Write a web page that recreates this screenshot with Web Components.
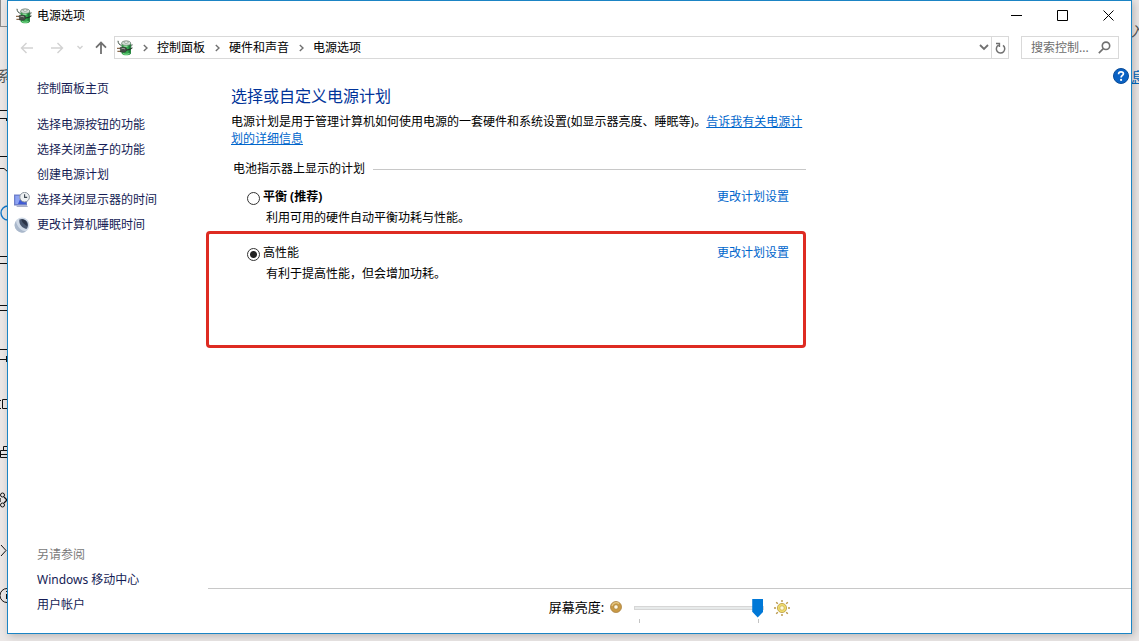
<!DOCTYPE html>
<html lang="zh-CN">
<head>
<meta charset="utf-8">
<title>电源选项</title>
<style>
  html, body {
    margin: 0;
    height: 100%;
  }

  body {
    font: 12px/18px "Noto Sans", "Noto Sans CJK SC", sans-serif;
    color: #000000;
  }
</style>
</head>
<body>
<desktop-area>
  <power-window>
    <title-bar slot="title">电源选项</title-bar>
    <address-bar slot="address"></address-bar>
    <side-nav slot="side"></side-nav>
    <plan-list>
      <power-plan recommended>
        平衡 (推荐)
        <span slot="description">利用可用的硬件自动平衡功耗与性能。</span>
      </power-plan>
      <power-plan checked highlighted>
        高性能
        <span slot="description">有利于提高性能，但会增加功耗。</span>
      </power-plan>
    </plan-list>
    <brightness-bar slot="footer"></brightness-bar>
  </power-window>
</desktop-area>

<script>
class DesktopArea extends HTMLElement {
  constructor () {
    super()
    this.shadow = this.attachShadow({ mode: 'open' })
  }

  connectedCallback () {
    this.shadow.innerHTML =
      /* html */`
      <style>
        :host {
          display: flex;
          position: relative;
          box-sizing: border-box;
          min-height: 100%;
          padding: 0 7px 7px;
          overflow: hidden;
          background: #ebe7e6;
        }

        ::slotted(*) {
          flex: 1;
          position: relative;
        }

        /* the settings page that peeks out behind the window */
        svg, .peek {
          position: absolute;
        }

        svg {
          left: 0;
          top: 0;
        }

        .peek {
          font-size: 14px;
          line-height: 20px;
          color: #555555;
        }

        .left {
          left: -3px;
          top: 66px;
        }

        .right {
          left: calc(100% - 8px);
          top: 21px;
        }

        .link {
          left: calc(100% - 8px);
          top: 67px;
          color: #0067c0;
          text-decoration: underline;
        }
      </style>

      <svg width="14" height="641" fill="none" stroke="#111111" aria-hidden="true">
        <path d="M0 26.5H8M.5 0V26" stroke="#8c8c8c"/>
        <path d="M0 110.5H8M0 118.5H8M6.5 119V121M0 156.5H8M0 168.5H4L8 172M0 256.5H8M0 263.5H8M0 305.5H8M0 310.5H8M0 349.5H8M0 359.5H8M6.5 356V362"/>
        <circle cx="8" cy="213" r="7" stroke="#1478c8" stroke-width="1.4"/>
        <path d="M0 400.5H1M0 408.5H1M8 399.5H2.5V408.5H8"/>
        <path d="M8 446.5H3.5V450.5M8 450.5H.5V457.5H8M0 454.5H8"/>
        <circle cx="2.5" cy="495" r="2"/>
        <circle cx="2.5" cy="505" r="2"/>
        <path d="M4 497L7 500L4 503M0 498V502" stroke-width="1.3"/>
        <path d="M1 545L6 550.5L1 556"/>
        <circle cx="7" cy="595.5" r="7"/>
        <path d="M6.5 594V599M6.5 591V592"/>
      </svg>
      <span class="peek left">系</span>
      <span class="peek right">入</span>
      <span class="peek link">息</span>
      <slot></slot>
      `
    this.style.height = '100%'
  }
}

class PowerWindow extends HTMLElement {
  constructor () {
    super()
    this.shadow = this.attachShadow({ mode: 'open' })
  }

  connectedCallback () {
    this.shadow.innerHTML =
      /* html */`
      <style>
        :host {
          display: flex;
          flex-direction: column;
          box-sizing: border-box;
          border: 1px solid #1b84c4;
          background: #ffffff;
          box-shadow: 2px 2px 8px rgba(0, 0, 0, 0.22);
        }

        .body {
          flex: 1;
          display: flex;
        }

        ::slotted(side-nav) {
          flex: 0 0 200px;
        }

        .main {
          flex: 1;
          min-width: 0;
          display: flex;
          flex-direction: column;
        }

        .content {
          flex: 1;
          display: flex;
          justify-content: space-between;
          align-items: flex-start;
        }

        .help {
          display: flex;
          margin: 9px 2px 0 0;
          padding: 0;
          border: none;
          border-radius: 50%;
          background: none;
        }
      </style>

      <slot name="title"></slot>
      <slot name="address"></slot>
      <div class="body">
        <slot name="side"></slot>
        <div class="main">
          <div class="content">
            <slot></slot>
            <button class="help" aria-label="帮助">
              <svg width="16" height="16" viewBox="0 0 16 16" fill="none">
                <circle cx="8" cy="8" r="7.5" fill="#0a62c4" stroke="#0b4c98"/>
                <path d="M5.6 6.2C5.6 4.6 6.6 3.8 8 3.8C9.5 3.8 10.4 4.7 10.4 5.8C10.4 7.4 8.1 7.5 8.1 9.5" stroke="#ffffff" stroke-width="1.7"/>
                <circle cx="8.1" cy="11.9" r="1.1" fill="#ffffff"/>
              </svg>
            </button>
          </div>
          <slot name="footer"></slot>
        </div>
      </div>
      `
  }
}

// green battery with a plug in front of it
class PowerIcon extends HTMLElement {
  constructor () {
    super()
    this.shadow = this.attachShadow({ mode: 'open' })
  }

  connectedCallback () {
    this.shadow.innerHTML =
      /* html */`
      <style>
        :host {
          display: flex;
          flex: none;
        }
      </style>

      <svg width="16" height="16" viewBox="0 0 16 16" fill="none" aria-hidden="true">
        <path d="M4.6 3.2V13.4C6.2 16 12.2 16 13.8 13.4V3.2Z" fill="#35a94f"/>
        <path d="M11.6 4V14.9C12.8 14.6 13.8 14 13.8 13.3V3.6Z" fill="#1d7a37"/>
        <path d="M6 12.8C7.5 14.2 10.5 14.2 12.6 12.8V13.8C11 15.2 7.5 15.2 6 13.8Z" fill="#7ed68c"/>
        <ellipse cx="9.2" cy="3.2" rx="4.5" ry="2.2" fill="#d3dfd6" stroke="#5c7062" stroke-width=".7"/>
        <ellipse cx="9.2" cy="2.2" rx="2" ry="1.1" fill="#f4f8f4" stroke="#6d7c70" stroke-width=".6"/>
        <path d="M6.6 6.2H10.5" stroke="#a5e8ae" stroke-width="1.2"/>
        <path d="M1 .8C1.2 3.6 2.4 4.8 4.6 5.4M13.6 6C14.8 6.2 15.4 5.2 14.9 4.2" stroke="#3b4d42"/>
        <path d="M0 8.4H3.6M.4 11.4H4" stroke="#8a6b4e" stroke-width="1.3"/>
        <path d="M3.2 7.4L6.2 7C8.8 7.2 10 8.6 9.8 10C9.4 11.8 7.8 12.4 6.2 12.3L3.6 12.1Z" fill="#454d47" stroke="#202a22" stroke-width=".5"/>
        <path d="M4.6 8.7C6 8.2 7.4 8.4 8 9.2" stroke="#b0b6b0"/>
        <path d="M9.8 9.8C11.6 10.2 13.6 9.4 15.4 7.6" stroke="#22352a" stroke-width="1.1"/>
      </svg>
      `
  }
}

class TitleBar extends HTMLElement {
  constructor () {
    super()
    this.shadow = this.attachShadow({ mode: 'open' })
  }

  connectedCallback () {
    this.shadow.innerHTML =
      /* html */`
      <style>
        :host {
          display: flex;
          align-items: center;
          height: 30px;
          padding-left: 8px;
        }

        .title {
          flex: 1;
          padding-left: 5px;
        }

        button {
          display: grid;
          place-items: center;
          align-self: flex-start;
          width: 46px;
          height: 28px;
          padding: 0;
          border: none;
          background: none;
        }

        button:hover {
          background: #e5e5e5;
        }
      </style>

      <power-icon></power-icon>
      <span class="title"><slot></slot></span>
      <button aria-label="最小化"><svg width="11" height="11" stroke="#000000"><path d="M0 5.5H11"/></svg></button>
      <button aria-label="最大化"><svg width="11" height="11" stroke="#000000" fill="none"><path d="M.5 .5H10.5V10.5H.5Z"/></svg></button>
      <button aria-label="关闭"><svg width="11" height="11" stroke="#000000"><path d="M.5 .5L10.5 10.5M10.5 .5L.5 10.5"/></svg></button>
      `
  }
}

class AddressBar extends HTMLElement {
  constructor () {
    super()
    this.shadow = this.attachShadow({ mode: 'open' })

    this.crumbs = ['控制面板', '硬件和声音', '电源选项']
  }

  connectedCallback () {
    this.shadow.innerHTML =
      /* html */`
      <style>
        :host {
          display: flex;
          padding: 5px 12px 0 4px;
        }

        button {
          display: grid;
          place-items: center;
          padding: 0;
          border: none;
          background: none;
        }

        svg {
          fill: none;
          stroke: #707070;
          stroke-width: 1.4;
        }

        .back, .forward {
          width: 30px;
        }

        .recent {
          width: 16px;
        }

        .up {
          width: 26px;
        }

        :disabled svg {
          stroke: #d2d2d2;
        }

        .path, .search {
          display: flex;
          align-items: center;
          box-sizing: border-box;
          height: 23px;
          border: 1px solid #d9d9d9;
        }

        .path {
          flex: 1;
          padding-left: 2px;
        }

        nav {
          flex: 1;
          display: flex;
          align-items: center;
        }

        nav a {
          color: #000000;
          text-decoration: none;
        }

        .chevron {
          width: 24px;
        }

        .drop {
          width: 15px;
          height: 21px;
        }

        .refresh {
          width: 17px;
          height: 21px;
          border-left: 1px solid #d9d9d9;
        }

        .search {
          width: 98px;
          margin-left: 12px;
          padding: 0 7px 0 9px;
        }

        input {
          flex: 1;
          min-width: 0;
          padding: 0;
          border: none;
          outline: none;
          background: none;
          font: inherit;
        }

        input::placeholder {
          color: #6d6d6d;
        }
      </style>

      <button class="back" aria-label="后退" disabled><svg width="14" height="12"><path d="M13 6H1.5M6.5 1L1.5 6L6.5 11"/></svg></button>
      <button class="forward" aria-label="前进" disabled><svg width="14" height="12"><path d="M1 6H12.5M7.5 1L12.5 6L7.5 11"/></svg></button>
      <button class="recent" aria-label="最近浏览的位置" disabled><svg width="6" height="5"><path d="M.5 1L3 3.5L5.5 1"/></svg></button>
      <button class="up" aria-label="上移"><svg width="12" height="13" style="stroke-width: 1.8"><path d="M6 13V1.8M1 6.6L6 1.6L11 6.6"/></svg></button>
      <div class="path">
        <power-icon></power-icon>
        <nav aria-label="路径"></nav>
        <button class="drop" aria-label="以前的位置"><svg width="10" height="7" style="stroke-width: 1.8"><path d="M1 1L5 5L9 1"/></svg></button>
        <button class="refresh" aria-label="刷新"><svg width="11" height="12" style="stroke-width: 1.5"><path d="M8 3.4A4.2 4.2 0 1 1 3.4 3.2M1 1.4H4.4V5"/></svg></button>
      </div>
      <div class="search">
        <input type="text" placeholder="搜索控制..." aria-label="搜索控制面板">
        <svg width="13" height="13" style="stroke-width: 1.6" aria-hidden="true"><circle cx="8" cy="4.8" r="3.7"/><path d="M5.3 7.6L.8 12.1"/></svg>
      </div>
      `

    const nav = this.shadow.querySelector('nav')

    this.crumbs.forEach(crumb => {
      const chevron = document.createElement('button')
      chevron.classList.add('chevron')
      chevron.setAttribute('aria-label', '展开')
      chevron.innerHTML = '<svg width="5" height="8"><path d="M.8 1L4 4L.8 7"/></svg>'
      nav.appendChild(chevron)

      const link = document.createElement('a')
      link.href = '#'
      link.textContent = crumb
      nav.appendChild(link)
    })
  }
}

class SideNav extends HTMLElement {
  constructor () {
    super()
    this.shadow = this.attachShadow({ mode: 'open' })
  }

  connectedCallback () {
    this.shadow.innerHTML =
      /* html */`
      <style>
        :host {
          display: flex;
          flex-direction: column;
          justify-content: space-between;
          box-sizing: border-box;
          padding: 17px 0 16px 6px;
          line-height: 25px;
        }

        ul {
          margin: 0;
          padding: 0;
          list-style: none;
        }

        li {
          display: grid;
          grid-template-columns: 16px 1fr;
          column-gap: 7px;
          align-items: center;
        }

        .home {
          margin-bottom: 11px;
        }

        a, .heading {
          grid-column: 2;
          justify-self: start;
        }

        a {
          color: #151c55;
          text-decoration: none;
        }

        a:hover {
          text-decoration: underline;
        }

        .heading {
          color: #7a7a7a;
        }
      </style>

      <ul>
        <li class="home"><a href="#">控制面板主页</a></li>
        <li><a href="#">选择电源按钮的功能</a></li>
        <li><a href="#">选择关闭盖子的功能</a></li>
        <li><a href="#">创建电源计划</a></li>
        <li>
          <svg width="16" height="16" viewBox="0 0 16 16" aria-hidden="true">
            <path d="M0 2.5H13V13.5H0Z" fill="#6f7fc6"/>
            <path d="M1.2 3.8H12V12H1.2Z" fill="#3f5ad6"/>
            <path d="M1.2 3.8H7.5L4 12H1.2Z" fill="#8ea3f2"/>
            <path d="M2 13.5H13L14 15H3Z" fill="#a9afc8"/>
            <circle cx="10.6" cy="5.2" r="4.8" fill="#edf0f2" stroke="#8d969e"/>
            <path d="M10.6 2.2V5.4H13.2" fill="none" stroke="#3a4650" stroke-width="1.1"/>
          </svg>
          <a href="#">选择关闭显示器的时间</a>
        </li>
        <li>
          <svg width="16" height="16" viewBox="0 0 16 16" aria-hidden="true">
            <circle cx="8" cy="8" r="7.5" fill="#cfd9e6"/>
            <path d="M2 4A7.4 7.4 0 0 0 12 14.4C7 14 3 10 2 4Z" fill="#aab8cb"/>
            <path d="M5.4 2.6C9 .8 14 3.4 14 8C14 9.8 13.4 11.2 12.4 12C8.4 11.4 4.6 7.4 5.4 2.6Z" fill="#4a5870"/>
            <path d="M7.4 2.6C11 2 13.6 5 13.2 9C11.6 8.6 8 6 7.4 2.6Z" fill="#2b3447"/>
          </svg>
          <a href="#">更改计算机睡眠时间</a>
        </li>
      </ul>
      <ul>
        <li><span class="heading">另请参阅</span></li>
        <li><a href="#">Windows 移动中心</a></li>
        <li><a href="#">用户帐户</a></li>
      </ul>
      `
  }
}

class PlanList extends HTMLElement {
  constructor () {
    super()
    this.shadow = this.attachShadow({ mode: 'open' })
  }

  connectedCallback () {
    this.shadow.innerHTML =
      /* html */`
      <style>
        :host {
          display: block;
          flex: 0 1 575px;
          padding: 25px 0 0 23px;
        }

        h1 {
          margin: 0;
          font-size: 16px;
          line-height: 24px;
          font-weight: normal;
          color: #003399;
        }

        p {
          margin: 5px 0 13px;
          line-height: 17px;
        }

        p a {
          color: #0066cc;
        }

        h2 {
          display: flex;
          align-items: center;
          gap: 8px;
          margin: 0 0 10px;
          padding-left: 2px;
          font-size: 12px;
          font-weight: normal;
        }

        h2::after {
          content: "";
          flex: 1;
          border-top: 1px solid #c8c8c8;
        }
      </style>

      <h1>选择或自定义电源计划</h1>
      <p>电源计划是用于管理计算机如何使用电源的一套硬件和系统设置(如显示器亮度、睡眠等)。<a href="#">告诉我有关电源计划的详细信息</a></p>
      <h2>电池指示器上显示的计划</h2>
      <slot></slot>
      `

    // radios in separate shadow roots do not group by name
    this.addEventListener('plan-selected', event => {
      this.querySelectorAll('power-plan').forEach(plan => {
        plan.radio.checked = plan === event.target
      })
    })
  }
}

class PowerPlan extends HTMLElement {
  constructor () {
    super()
    this.shadow = this.attachShadow({ mode: 'open' })
  }

  connectedCallback () {
    this.shadow.innerHTML =
      /* html */`
      <style>
        :host {
          display: grid;
          grid-template-columns: 1fr auto;
          row-gap: 3px;
          padding: 0 17px 4px 16px;
        }

        :host([highlighted]) {
          margin-left: -25px;
          padding: 10px 14px 62px 38px;
          border: 3px solid #de2b22;
          border-radius: 4px;
        }

        :host([recommended]) label {
          font-weight: bold;
        }

        .choice {
          display: flex;
          align-items: center;
          gap: 3px;
        }

        input {
          appearance: none;
          box-sizing: border-box;
          width: 13px;
          height: 13px;
          margin: 2px 0 0;
          border: 1px solid #333333;
          border-radius: 50%;
          background: #ffffff;
        }

        input:checked {
          background: radial-gradient(circle, #222222 3px, #ffffff 4px);
        }

        a {
          color: #0066cc;
          text-decoration: none;
        }

        .description {
          grid-column: 1 / -1;
          padding-left: 19px;
        }
      </style>

      <div class="choice">
        <input type="radio" id="plan">
        <label for="plan"><slot></slot></label>
      </div>
      <a href="#">更改计划设置</a>
      <div class="description"><slot name="description"></slot></div>
      `

    this.radio = this.shadow.querySelector('input')
    this.radio.checked = this.hasAttribute('checked')
    this.radio.addEventListener('change', () => {
      this.dispatchEvent(new CustomEvent('plan-selected', { bubbles: true }))
    })
  }
}

class BrightnessBar extends HTMLElement {
  constructor () {
    super()
    this.shadow = this.attachShadow({ mode: 'open' })
  }

  connectedCallback () {
    this.shadow.innerHTML =
      /* html */`
      <style>
        :host {
          display: flex;
          justify-content: center;
          align-items: flex-start;
          padding: 9px 0 10px;
          border-top: 1px solid #c8c8c8;
        }

        label {
          font-size: 13px;
        }

        svg {
          flex: none;
        }

        .dim {
          margin: 3px 12px 0 6px;
        }

        .bright {
          margin: 2px 0 0 10px;
        }

        .slider {
          width: 130px;
        }

        input {
          appearance: none;
          display: block;
          width: 100%;
          height: 19px;
          margin: 0;
          background: none;
        }

        input::-webkit-slider-runnable-track {
          height: 4px;
          box-sizing: border-box;
          border: 1px solid #d6d6d6;
          background: #e7eaea;
        }

        input::-webkit-slider-thumb {
          appearance: none;
          width: 11px;
          height: 19px;
          margin-top: -8px;
          background: #0078d7;
          clip-path: polygon(0 0, 100% 0, 100% 70%, 50% 100%, 0 70%);
        }

        .ticks {
          height: 4px;
          margin: 2px 5px 0;
          border: solid #c4c4c4;
          border-width: 0 1px;
        }
      </style>

      <label for="brightness">屏幕亮度:</label>
      <svg class="dim" width="12" height="12" viewBox="0 0 12 12" aria-hidden="true">
        <circle cx="6" cy="6" r="5.5" fill="#c99a45" stroke="#a98142" stroke-width=".8"/>
        <path d="M2 5A4.2 4.2 0 0 1 9 2.8" fill="none" stroke="#e4c886" stroke-width="1.2"/>
        <circle cx="6" cy="6" r="2.2" fill="#fff8e4" stroke="#9c7431" stroke-width=".6"/>
      </svg>
      <div class="slider">
        <input type="range" id="brightness" min="0" max="100" value="100">
        <div class="ticks"></div>
      </div>
      <svg class="bright" width="16" height="16" viewBox="0 0 16 16" aria-hidden="true">
        <path d="M8 0V2M8 14V16M0 8H2M14 8H16M2.2 2.2L3.8 3.8M12.2 12.2L13.8 13.8M13.8 2.2L12.2 3.8M3.8 12.2L2.2 13.8" stroke="#b9974a" stroke-width="1.4"/>
        <circle cx="8" cy="8" r="4.6" fill="#efdb6a" stroke="#b89a42" stroke-width=".8"/>
        <circle cx="8" cy="8" r="2.2" fill="#fffbdc" stroke="#c5a94c" stroke-width=".7"/>
      </svg>
      `
  }
}

customElements.define('power-icon', PowerIcon)
customElements.define('desktop-area', DesktopArea)
customElements.define('power-window', PowerWindow)
customElements.define('title-bar', TitleBar)
customElements.define('address-bar', AddressBar)
customElements.define('side-nav', SideNav)
customElements.define('plan-list', PlanList)
customElements.define('power-plan', PowerPlan)
customElements.define('brightness-bar', BrightnessBar)
</script>
</body>
</html>
